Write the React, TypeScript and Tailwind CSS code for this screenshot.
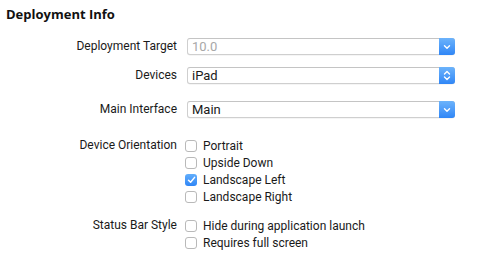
import React from "react";

type SelectProps = { value: string; muted?: boolean; updown?: boolean };

function Chevron({ updown }: { updown?: boolean }) {
    if (updown) {
        return (
            <svg width="8" height="11" viewBox="0 0 8 11" fill="none">
                <path d="M1.5 4 L4 1.5 L6.5 4" stroke="white" strokeWidth="1.4" strokeLinecap="round" strokeLinejoin="round" />
                <path d="M1.5 7 L4 9.5 L6.5 7" stroke="white" strokeWidth="1.4" strokeLinecap="round" strokeLinejoin="round" />
            </svg>
        );
    }
    return (
        <svg width="8" height="6" viewBox="0 0 8 6" fill="none">
            <path d="M1.5 1.8 L4 4.2 L6.5 1.8" stroke="white" strokeWidth="1.4" strokeLinecap="round" strokeLinejoin="round" />
        </svg>
    );
}

function Select({ value, muted, updown }: SelectProps) {
    return (
        <div className="flex h-[17px] w-[268px] rounded-[3px] border border-[#cfcfcf] border-t-[#c4c4c4] bg-white shadow-[0_0.5px_0.5px_rgba(0,0,0,0.08)]">
            <div className={"flex-1 pl-[4px] text-[13px] leading-[15px] " + (muted ? "text-[#a8a8a8]" : "text-[#1a1a1a]")}>{value}</div>
            <div className="-my-px -mr-px flex w-[16px] items-center justify-center rounded-r-[3px] bg-gradient-to-b from-[#6cb3fb] to-[#2f86f6]">
                <Chevron updown={updown} />
            </div>
        </div>
    );
}

function Check({ label, checked }: { label: string; checked?: boolean }) {
    return (
        <div className="flex h-[17px] items-center">
            {checked ? (
                <div className="flex h-[12px] w-[12px] items-center justify-center rounded-[3px] bg-gradient-to-b from-[#62aefb] to-[#2e85f6]">
                    <svg width="9" height="8" viewBox="0 0 9 8" fill="none">
                        <path d="M1.5 4.2 L3.6 6.3 L7.6 1.4" stroke="white" strokeWidth="1.5" strokeLinecap="round" strokeLinejoin="round" />
                    </svg>
                </div>
            ) : (
                <div className="h-[12px] w-[12px] rounded-[3px] border border-[#b9b9b9] bg-white" />
            )}
            <span className="ml-[6px] text-[12px] text-[#1a1a1a]">{label}</span>
        </div>
    );
}

function Row({ label, children, className = "" }: { label: string; children: React.ReactNode; className?: string }) {
    return (
        <div className={"flex items-start " + className}>
            <div className="w-[177px] shrink-0 text-right text-[12px] leading-[17px] text-[#1a1a1a]">{label}</div>
            <div className="ml-[8px]">{children}</div>
        </div>
    );
}

export default function App() {
    return (
        <div className="h-[269px] w-[494px] bg-white font-['Roboto',Arial,sans-serif]">
            <div className="pl-[6px] pt-[6px] font-['Open_Sans',Arial,sans-serif] text-[13px] font-bold leading-[16px] text-[#111]">Deployment Info</div>

            <div className="mt-[16px]">
                <Row label="Deployment Target">
                    <div className="ml-[2px]">
                        <Select value="10.0" muted />
                    </div>
                </Row>
                <Row label="Devices" className="mt-[12px]">
                    <div className="ml-[2px]">
                        <Select value="iPad" updown />
                    </div>
                </Row>
                <Row label="Main Interface" className="mt-[17px]">
                    <div className="ml-[2px]">
                        <Select value="Main" />
                    </div>
                </Row>

                <Row label="Device Orientation" className="mt-[19px]">
                    <Check label="Portrait" />
                    <Check label="Upside Down" />
                    <Check label="Landscape Left" checked />
                    <Check label="Landscape Right" />
                </Row>

                <Row label="Status Bar Style" className="mt-[12px]">
                    <Check label="Hide during application launch" />
                    <Check label="Requires full screen" />
                </Row>
            </div>
        </div>
    );
}
